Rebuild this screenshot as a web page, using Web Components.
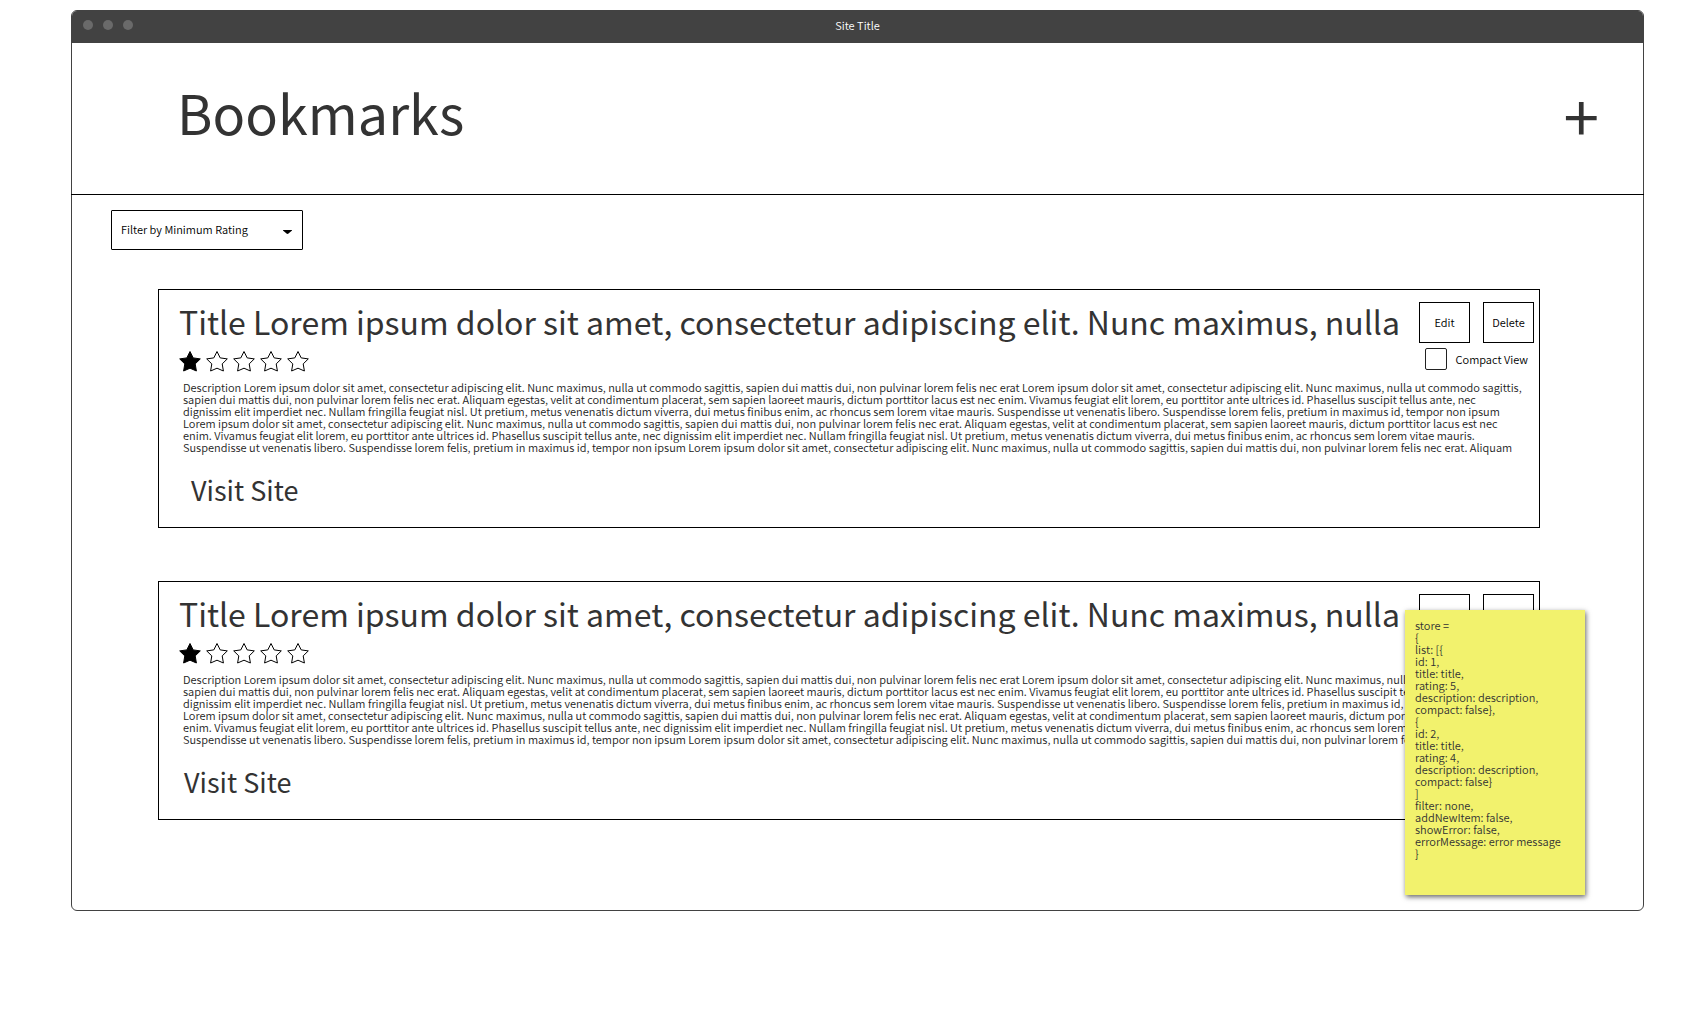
<!DOCTYPE html>
<html lang="en">
<head>
<meta charset="utf-8">
<title>Bookmarks</title>
<style>
  body {
    margin: 0;
    padding: 10px 50px 40px 71px;
    background: #fff;
    color: #333;
    font-family: "Noto Sans CJK SC", "Noto Sans", sans-serif;
    font-size: 11px;
    font-weight: 350;
    line-height: 12px;
  }
</style>
</head>
<body>

<template id="window-template">
  <style>
    :host { display: block; position: relative; box-sizing: border-box; border: 1px solid #424242; border-radius: 6px; }
    .bar { display: grid; grid-template-columns: 1fr auto 1fr; align-items: center; height: 28px; padding: 0 11px 4px; background: #424242; color: #fff; border-radius: 5px 5px 0 0; }
    .dots { display: flex; gap: 10px; }
    .dots i { width: 10px; height: 10px; border-radius: 50%; background: #6a6a6a; }
    ::slotted(store-note) { position: absolute; right: 58px; bottom: 15px; }
  </style>
  <div class="bar"><div class="dots"><i></i><i></i><i></i></div><span class="title"></span></div>
  <slot></slot>
</template>

<template id="header-template">
  <style>
    :host { display: flex; justify-content: space-between; align-items: flex-start; margin: 0 -1px; padding: 37px 45px 48px 106px; border-bottom: 1px solid #000; }
    h1 { margin: 0; font-size: 54px; line-height: 64px; font-weight: 400; }
    button { margin: 2px 0 0; padding: 0; border: 0; background: none; color: inherit; font: 400 64px/64px "Noto Sans CJK SC", sans-serif; }
  </style>
  <h1><slot></slot></h1>
  <button type="button" aria-label="Add bookmark">+</button>
</template>

<template id="filter-template">
  <style>
    :host { display: flex; padding: 15px 39px 39px; }
    .box { display: grid; align-items: center; width: 192px; height: 40px; box-sizing: border-box; border: 1px solid #000; border-radius: 1px; }
    select, svg { grid-area: 1 / 1; }
    select { appearance: none; width: 100%; height: 100%; margin: 0; padding: 0 32px 2px 9px; border: 0; border-radius: 0; background: none; color: #000; font: inherit; line-height: 16px; }
    svg { justify-self: end; margin: 4px 10px 0 0; pointer-events: none; }
  </style>
  <div class="box">
    <select aria-label="Filter by Minimum Rating"><option>Filter by Minimum Rating</option></select>
    <svg width="9" height="4" viewBox="0 0 9 4"><path d="M0 0H9V.6L5.500 3.600Q4.500 4.200 3.500 3.600L0 .6Z"/></svg>
  </div>
</template>

<template id="stars-template">
  <style>
    :host { display: flex; gap: 5px; }
    svg { width: 22px; height: 22px; overflow: visible; }
    path { fill: none; stroke: #000; stroke-width: 1; stroke-linejoin: miter; }
    .on path { fill: #000; }
  </style>
</template>

<template id="card-template">
  <style>
    :host { display: block; border: 1px solid #000; padding: 11px 5px 21px 20px; }
    .head { display: flex; justify-content: space-between; }
    h2 { margin: 0 0 9px; font-size: 32px; line-height: 40px; font-weight: 400; white-space: nowrap; }
    .side { display: flex; flex-direction: column; align-items: flex-end; gap: 5px; padding-top: 1px; }
    .actions { display: flex; gap: 13px; }
    button { width: 51px; height: 41px; box-sizing: border-box; margin: 0; padding: 0 0 2px; border: 1px solid #000; border-radius: 0; background: #fff; color: #000; font: inherit; }
    label { display: flex; align-items: center; gap: 9px; padding-right: 6px; color: #000; }
    input { appearance: none; width: 22px; height: 22px; margin: 0; border: 1px solid #222; border-radius: 2px; background: #fff; }
    .text { margin: 9px 9px 21px 4px; color: #222; }
    a { display: table; margin-left: var(--link-indent, 12px); color: inherit; font-size: 27px; font-weight: 400; line-height: 32px; text-decoration: none; }
  </style>
  <div class="head">
    <div>
      <h2><slot name="title"></slot></h2>
      <star-rating></star-rating>
    </div>
    <div class="side">
      <div class="actions"><button type="button">Edit</button><button type="button">Delete</button></div>
      <label><input type="checkbox">Compact View</label>
    </div>
  </div>
  <div class="text"><slot></slot></div>
  <a href="#">Visit Site</a>
</template>

<template id="list-template">
  <style>
    :host { display: flex; flex-direction: column; gap: 53px; padding: 0 103px 90px 86px; }
  </style>
  <slot></slot>
</template>

<template id="note-template">
  <style>
    :host { display: block; box-sizing: border-box; width: 180px; padding: 9px 10px 36px; background: #f2f26d; color: #333; box-shadow: 1px 2px 5px rgba(0, 0, 0, .6); }
    slot { display: block; white-space: pre-line; }
  </style>
  <slot></slot>
</template>

<app-window heading="Site Title">
  <page-header>Bookmarks</page-header>
  <rating-filter></rating-filter>
  <bookmark-list>
    <bookmark-card rating="1">
      <span slot="title">Title Lorem ipsum dolor sit amet, consectetur adipiscing elit. Nunc maximus, nulla</span>
      Description Lorem ipsum dolor sit amet, consectetur adipiscing elit. Nunc maximus, nulla ut commodo sagittis, sapien dui mattis dui, non pulvinar lorem felis nec erat Lorem ipsum dolor sit amet, consectetur adipiscing elit. Nunc maximus, nulla ut commodo sagittis, sapien dui mattis dui, non pulvinar lorem felis nec erat. Aliquam egestas, velit at condimentum placerat, sem sapien laoreet mauris, dictum porttitor lacus est nec enim. Vivamus feugiat elit lorem, eu porttitor ante ultrices id. Phasellus suscipit tellus ante, nec dignissim elit imperdiet nec. Nullam fringilla feugiat nisl. Ut pretium, metus venenatis dictum viverra, dui metus finibus enim, ac rhoncus sem lorem vitae mauris. Suspendisse ut venenatis libero. Suspendisse lorem felis, pretium in maximus id, tempor non ipsum Lorem ipsum dolor sit amet, consectetur adipiscing elit. Nunc maximus, nulla ut commodo sagittis, sapien dui mattis dui, non pulvinar lorem felis nec erat. Aliquam egestas, velit at condimentum placerat, sem sapien laoreet mauris, dictum porttitor lacus est nec enim. Vivamus feugiat elit lorem, eu porttitor ante ultrices id. Phasellus suscipit tellus ante, nec dignissim elit imperdiet nec. Nullam fringilla feugiat nisl. Ut pretium, metus venenatis dictum viverra, dui metus finibus enim, ac rhoncus sem lorem vitae mauris. Suspendisse ut venenatis libero. Suspendisse lorem felis, pretium in maximus id, tempor non ipsum Lorem ipsum dolor sit amet, consectetur adipiscing elit. Nunc maximus, nulla ut commodo sagittis, sapien dui mattis dui, non pulvinar lorem felis nec erat. Aliquam
    </bookmark-card>
    <bookmark-card rating="1" style="--link-indent: 5px">
      <span slot="title">Title Lorem ipsum dolor sit amet, consectetur adipiscing elit. Nunc maximus, nulla</span>
      Description Lorem ipsum dolor sit amet, consectetur adipiscing elit. Nunc maximus, nulla ut commodo sagittis, sapien dui mattis dui, non pulvinar lorem felis nec erat Lorem ipsum dolor sit amet, consectetur adipiscing elit. Nunc maximus, nulla ut commodo sagittis, sapien dui mattis dui, non pulvinar lorem felis nec erat. Aliquam egestas, velit at condimentum placerat, sem sapien laoreet mauris, dictum porttitor lacus est nec enim. Vivamus feugiat elit lorem, eu porttitor ante ultrices id. Phasellus suscipit tellus ante, nec dignissim elit imperdiet nec. Nullam fringilla feugiat nisl. Ut pretium, metus venenatis dictum viverra, dui metus finibus enim, ac rhoncus sem lorem vitae mauris. Suspendisse ut venenatis libero. Suspendisse lorem felis, pretium in maximus id, tempor non ipsum Lorem ipsum dolor sit amet, consectetur adipiscing elit. Nunc maximus, nulla ut commodo sagittis, sapien dui mattis dui, non pulvinar lorem felis nec erat. Aliquam egestas, velit at condimentum placerat, sem sapien laoreet mauris, dictum porttitor lacus est nec enim. Vivamus feugiat elit lorem, eu porttitor ante ultrices id. Phasellus suscipit tellus ante, nec dignissim elit imperdiet nec. Nullam fringilla feugiat nisl. Ut pretium, metus venenatis dictum viverra, dui metus finibus enim, ac rhoncus sem lorem vitae mauris. Suspendisse ut venenatis libero. Suspendisse lorem felis, pretium in maximus id, tempor non ipsum Lorem ipsum dolor sit amet, consectetur adipiscing elit. Nunc maximus, nulla ut commodo sagittis, sapien dui mattis dui, non pulvinar lorem felis nec erat. Aliquam
    </bookmark-card>
  </bookmark-list>
  <store-note>store =
{
list: [{
id: 1,
title: title,
rating: 5,
description: description,
compact: false},
{
id: 2,
title: title,
rating: 4,
description: description,
compact: false}
]
filter: none,
addNewItem: false,
showError: false,
errorMessage: error message
}</store-note>
</app-window>

<script>
  class TemplateElement extends HTMLElement {
    constructor() {
      super();
      const template = document.getElementById(this.constructor.template);
      this.attachShadow({ mode: 'open' }).append(template.content.cloneNode(true));
    }
  }

  customElements.define('star-rating', class extends TemplateElement {
    static template = 'stars-template';
    static observedAttributes = ['value'];
    connectedCallback() { this.draw(); }
    attributeChangedCallback() { this.draw(); }
    draw() {
      this.shadowRoot.querySelectorAll('svg').forEach(s => s.remove());
      const value = Number(this.getAttribute('value') || 0);
      for (let i = 0; i < 5; i++) {
        const holder = document.createElement('template');
        holder.innerHTML = `<svg viewBox="0 0 22 22" class="${i < value ? 'on' : ''}"><path d="M11 1.500L14.200 7.900L21.300 8.900L16.200 13.900L17.400 21L11 18.200L4.600 21L5.800 13.900L.7 8.900L7.800 7.900Z"/></svg>`;
        this.shadowRoot.append(holder.content);
      }
    }
  });

  customElements.define('app-window', class extends TemplateElement {
    static template = 'window-template';
    connectedCallback() {
      this.shadowRoot.querySelector('.title').textContent = this.getAttribute('heading');
    }
  });

  customElements.define('page-header', class extends TemplateElement { static template = 'header-template'; });
  customElements.define('rating-filter', class extends TemplateElement { static template = 'filter-template'; });
  customElements.define('bookmark-list', class extends TemplateElement { static template = 'list-template'; });

  customElements.define('bookmark-card', class extends TemplateElement {
    static template = 'card-template';
    connectedCallback() {
      this.shadowRoot.querySelector('star-rating').setAttribute('value', this.getAttribute('rating'));
    }
  });

  customElements.define('store-note', class extends TemplateElement { static template = 'note-template'; });
</script>
</body>
</html>
